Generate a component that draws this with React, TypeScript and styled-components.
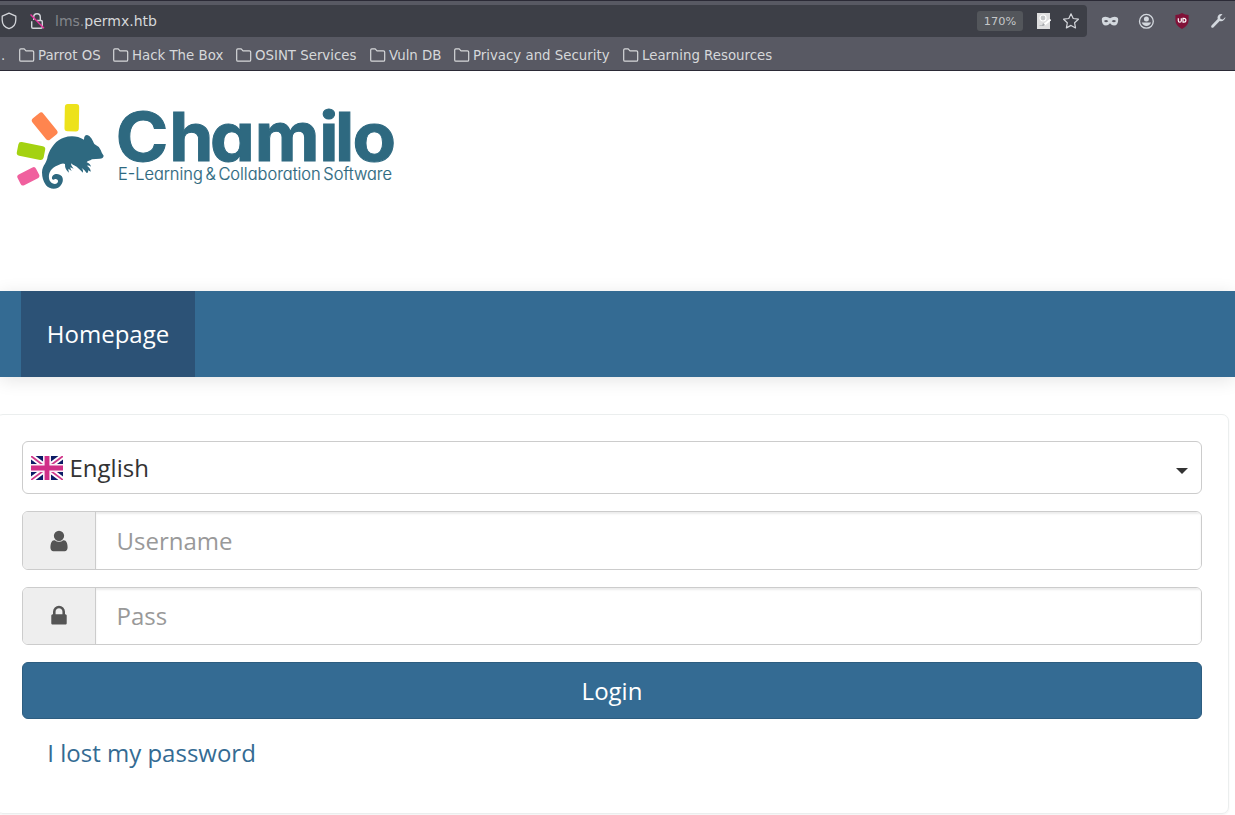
import React from "react";
import styled, { createGlobalStyle } from "styled-components";

const GlobalStyle = createGlobalStyle`
  * { box-sizing: border-box; }
  html, body { margin: 0; padding: 0; background: #fff; }
  body { overflow: hidden; font-family: "Open Sans", sans-serif; font-size: 24px; color: #333; }
`;

const Page = styled.div`
  width: 1235px;
  height: 815px;
  overflow: hidden;
  display: flex;
  flex-direction: column;
`;

const Chrome = styled.div`
  height: 71px;
  flex: none;
  background: #585963;
  border-top: 1px solid #2b2a36;
  border-bottom: 1px solid #2b2a36;
  font-family: "DejaVu Sans", sans-serif;
  color: #d6d8da;
`;

const Toolbar = styled.div`
  display: flex;
  align-items: center;
  padding-top: 4px;
  height: 36px;
`;

const AddressBar = styled.div`
  display: flex;
  align-items: center;
  width: 1087px;
  height: 32px;
  background: #3d3f47;
  border-radius: 0 4px 4px 0;
  padding-right: 7px;
  svg { flex: none; }
`;

const Gap = styled.span`
  width: 11px;
  flex: none;
`;

const Url = styled.div`
  font-size: 14px;
  line-height: 20px;
  margin-left: 10px;
  flex: 1;
  span { color: #83868c; }
`;

const ZoomBadge = styled.div`
  width: 46px;
  height: 20px;
  border-radius: 3px;
  background: #53565b;
  color: #c5c8ca;
  font-size: 11.3px;
  line-height: 21px;
  text-align: center;
  margin-right: 12px;
`;

const Extensions = styled.div`
  display: flex;
  align-items: center;
  padding-left: 14px;
  gap: 18px;
`;

const Bookmarks = styled.div`
  display: flex;
  align-items: center;
  height: 33px;
  padding-top: 2px;
  font-size: 13.333px;
  line-height: 16px;
`;

const Overflow = styled.span`
  width: 19px;
  padding: 2px 0 0 1px;
`;

const Bookmark = styled.div<{ $w: number }>`
  display: flex;
  align-items: center;
  gap: 3px;
  width: ${(p) => p.$w}px;
  white-space: nowrap;
  span { padding-top: 2px; }
`;

const Header = styled.header`
  height: 220px;
  flex: none;
  padding: 24px 0 0 10px;
  svg { display: block; }
`;

const Nav = styled.nav`
  height: 86px;
  flex: none;
  display: flex;
  padding-left: 21px;
  background: #346b93;
  box-shadow: 0 3px 17px rgba(0, 0, 0, 0.11);
`;

const NavItem = styled.a`
  width: 174px;
  display: flex;
  align-items: center;
  justify-content: center;
  padding-bottom: 2px;
  background: #2c5276;
  color: #fff;
`;

const Panel = styled.section`
  margin: 37px 6px 0 -4px;
  height: 400px;
  border: 1px solid #ebeeee;
  border-radius: 7px;
  box-shadow: 0 1px 2px rgba(0, 0, 0, 0.05);
  padding: 26px 26px 0 25px;
  display: flex;
  flex-direction: column;
  gap: 17px;
`;

const Language = styled.div`
  height: 53px;
  flex: none;
  display: flex;
  align-items: center;
  border: 1px solid #ccc;
  border-radius: 6px;
  padding: 0 13px 0 8px;
  span { margin-left: 6.5px; flex: 1; }
`;

const Caret = styled.i`
  margin-top: 6px;
  border: 6px solid transparent;
  border-top-color: #333;
  border-bottom: 0;
`;

const Field = styled.label<{ $h: number }>`
  height: ${(p) => p.$h}px;
  flex: none;
  display: flex;
  border: 1px solid #ccc;
  border-radius: 6px;
  overflow: hidden;
`;

const Addon = styled.span`
  width: 73px;
  display: flex;
  align-items: center;
  justify-content: center;
  padding-right: 1px;
  background: #eee;
  border-right: 1px solid #ccc;
  color: #555;
`;

const Input = styled.input<{ $lift?: number }>`
  flex: 1;
  border: 0;
  outline: 0;
  padding: 0 20px ${(p) => p.$lift ?? 0}px 20.5px;
  background: #fff;
  box-shadow: inset 0 2px 2px rgba(0, 0, 0, 0.075);
  font: inherit;
  &::placeholder { color: #999; opacity: 1; }
`;

const LoginButton = styled.button`
  height: 57px;
  flex: none;
  border: 1px solid #2d5d80;
  border-radius: 6px;
  background: #346b93;
  color: #fff;
  font: inherit;
  padding: 0;
`;

const LostLink = styled.a`
  color: #346b93;
  padding-left: 25.3px;
  line-height: 34px;
`;

const Folder = () => (
  <svg width="16" height="16" viewBox="0 0 16 16" fill="none" stroke="#d6d8da" strokeWidth="1.2" strokeLinejoin="round">
    <path d="M.7 12.900V3Q.7 1.800 1.800 1.800h3.400l1.800 2h6.400q1.300 0 1.300 1.200v7.900q0 1.300-1.300 1.300H2Q.7 14.200.7 12.900Z" />
  </svg>
);

const ShieldIcon = () => (
  <svg width="18" height="18" viewBox="0 0 18 18" fill="none" stroke="#d3d5da" strokeWidth="1.300" strokeLinejoin="round">
    <path d="M9 1.200 15.800 4.200v3.700C15.800 12.200 12.800 15.400 9 16.600 5.200 15.400 2.200 12.200 2.200 7.900V4.200Z" />
  </svg>
);

const InsecureIcon = () => (
  <svg width="16" height="18" viewBox="0 0 16 18" fill="none" stroke="#d3d5da" strokeWidth="1.400">
    <path d="M4.700 8V5a3.300 3.300 0 0 1 6.600 0V8M2.700 9.200v5.800q0 1.200 1.200 1.200h8.200q1.200 0 1.200-1.200V9.700q0-1.200-1.200-1.200H8" />
    <path d="M1.500 2.500 15 16.300" stroke="#e8339e" />
  </svg>
);

const ReaderIcon = () => (
  <svg width="16" height="18" viewBox="0 0 16 18">
    <path d="M2 1h13v16H2z" fill="#dededf" />
    <circle cx="8" cy="6" r="3" fill="#c4c6c8" stroke="#fff" strokeWidth="1.200" />
    <path d="M4.500 13.500H9" stroke="#bbbdc0" />
    <path d="m9.500 12.500 6-5" stroke="#fff" strokeWidth="2" />
    <path d="m8 11 2 2-3 1z" fill="#a5a8ab" />
  </svg>
);

const StarIcon = () => (
  <svg width="18" height="18" viewBox="0 0 18 18" fill="none" stroke="#d3d5da" strokeWidth="1.200" strokeLinejoin="round">
    <path d="m9 1.800 2.200 4.700 5.200.7-3.800 3.600.9 5.100L9 13.400l-4.600 2.500.9-5.100-3.700-3.600 5.200-.7Z" />
  </svg>
);

const MaskIcon = () => (
  <svg width="18" height="18" viewBox="0 0 18 18">
    <path fill="#d3d8de" fillRule="evenodd" d="M.8 7.500Q.8 4.700 4.500 4.700 7 4.700 9 6.200 11 4.700 13.500 4.700q3.700 0 3.700 2.800 0 6-4.200 6Q10.800 13.500 9 11.300q-1.800 2.200-4 2.200-4.200 0-4.200-6ZM3 9q1.800 2.300 4.300.2Q5.200 6.700 3 9Zm7.700.2Q13.200 11.300 15 9q-2.200-2.300-4.300.2Z" />
  </svg>
);

const AccountIcon = () => (
  <svg width="18" height="18" viewBox="0 0 18 18">
    <circle cx="9.400" cy="9.300" r="6.900" fill="none" stroke="#d3d8de" strokeWidth="1.300" />
    <circle cx="9.400" cy="7" r="2.500" fill="#d3d8de" />
    <path d="M4.700 10.500h9.400Q12.700 13.900 9.400 13.900T4.700 10.500Z" fill="#d3d8de" />
  </svg>
);

const BlockerIcon = () => (
  <svg width="18" height="18" viewBox="0 0 18 18">
    <path d="M9 1q3 2 6.600 2v5.200Q15.600 13.500 9 17 2.400 13.500 2.400 8.200V3Q6 3 9 1Z" fill="#801238" />
    <path d="M5.300 6.200v2.500q0 1.500 1.500 1.500T8.300 8.700V6.200M10 6.300v3.800h.9q2 0 2-1.900t-2-1.900Z" fill="none" stroke="#fff" strokeWidth="1.200" />
  </svg>
);

const WrenchIcon = () => (
  <svg width="18" height="18" viewBox="0 0 18 18">
    <path d="M15.900 4.700 13.400 7.200 11 6.800l-.4-2.300L13 2Q10.500 1.300 8.900 3 7.500 4.600 8.200 6.800L2 13.200q-.8 1 0 1.900t1.900 0l6.300-6.300q2.400.8 4.200-1 1.600-1.500 1.500-3.100Z" transform="translate(.5 .3)" fill="#d3d8de" />
  </svg>
);

const UserIcon = () => (
  <svg width="24" height="24" viewBox="0 0 1792 1792" fill="currentColor">
    <path d="M1536 1399q0 109-62.500 187t-150.500 78h-854q-88 0-150.500-78t-62.500-187q0-85 8.500-160.500t31.500-152 58.500-131 94-89 134.500-34.500q131 128 313 128t313-128q76 0 134.500 34.500t94 89 58.500 131 31.500 152 8.500 160.500zm-256-887q0 159-112.500 271.500t-271.500 112.500-271.500-112.500-112.500-271.500 112.500-271.500 271.500-112.500 271.500 112.500 112.500 271.500z" />
  </svg>
);

const LockIcon = () => (
  <svg width="24" height="24" viewBox="0 0 1792 1792" fill="currentColor">
    <path d="M640 768h512v-192q0-106-75-181t-181-75-181 75-75 181v192zm832 96v576q0 40-28 68t-68 28h-960q-40 0-68-28t-28-68v-576q0-40 28-68t68-28h32v-192q0-184 132-316t316-132 316 132 132 316v192h32q40 0 68 28t28 68z" />
  </svg>
);

const Logo = () => (
  <svg width="390" height="100" viewBox="0 0 1170 300">
    <rect x="164" y="27" width="43" height="82" rx="9" fill="#ede21b" transform="rotate(1 185 68)" />
    <rect x="83" y="53" width="42" height="82" rx="9" fill="#ff854f" transform="rotate(-39 104 94)" />
    <rect x="22" y="147" width="82" height="42" rx="9" fill="#a4d211" transform="rotate(11 63 168)" />
    <rect x="24" y="226" width="62" height="36" rx="8" fill="#f0609e" transform="rotate(-27 55 244)" />
    <path
      fill="#2e6980"
      d="M96 232C97 211 111 204 113 184C120 158 141 133 161 128C181 121 203 122 222 134Q222 120 231 120C243 123 248 137 253 147Q266 153 272 165Q276 177 281 182Q280 191 269 191L246 193C239 198 233 197 230 202Q241 206 243 215Q236 210 231 212Q243 221 242 230L234 226Q236 234 230 234Q225 225 215 219Q221 225 219 233Q211 225 200 215Q185 209 185 205Q180 209 191 221L181 217Q181 222 185 228L175 221Q175 225 177 233Q164 223 165 207Q157 203 144 211C124 219 115 232 117 250C119 264 133 270 141 265C147 259 144 252 135 252Q129 257 126 251C124 239 139 233 149 239C160 243 161 257 155 267C144 287 119 284 108 271Q96 255 96 232Z"
    />
    <g fill="#2e6980">
      <text x="299 451 566 693 875 920 969" y="197" transform="scale(1.06 1)" fontFamily="Inter, sans-serif" fontWeight="700" fontSize="201" stroke="#2e6980" strokeWidth="3" style={{ fontFeatureSettings: '"cv11"' }}>
        Chamilo
      </text>
      <text x="324" y="255" fontFamily="Inter, sans-serif" fontWeight="300" fontSize="50" textLength="822" lengthAdjust="spacingAndGlyphs" stroke="#2e6980" strokeWidth=".6" style={{ fontFeatureSettings: '"cv11"', wordSpacing: "-6px" }}>
        E-Learning &amp; Collaboration Software
      </text>
    </g>
  </svg>
);

const UkFlag = () => (
  <svg width="32" height="24" viewBox="0 0 32 24">
    <rect width="32" height="24" fill="#0c1c66" />
    <path d="M0 0 32 24M32 0 0 24" stroke="#fff" strokeWidth="5.500" />
    <path d="M0 0 32 24M32 0 0 24" stroke="#d13a8c" strokeWidth="1.800" />
    <path d="M16 0v24M0 12h32" stroke="#fbeef6" strokeWidth="8" />
    <path d="M16 0v24M0 12h32" stroke="#d02f88" strokeWidth="4.800" />
  </svg>
);

const bookmarks = [
  { label: "Parrot OS", width: 94 },
  { label: "Hack The Box", width: 123 },
  { label: "OSINT Services", width: 134 },
  { label: "Vuln DB", width: 84 },
  { label: "Privacy and Security", width: 169 },
  { label: "Learning Resources", width: 160 },
];

export default function App() {
  return (
    <Page>
      <GlobalStyle />
      <Chrome>
        <Toolbar>
          <AddressBar>
            <ShieldIcon />
            <Gap />
            <InsecureIcon />
            <Url><span>lms.</span>permx.htb</Url>
            <ZoomBadge>170%</ZoomBadge>
            <ReaderIcon />
            <Gap />
            <StarIcon />
          </AddressBar>
          <Extensions>
            <MaskIcon />
            <AccountIcon />
            <BlockerIcon />
            <WrenchIcon />
          </Extensions>
        </Toolbar>
        <Bookmarks>
          <Overflow>.</Overflow>
          {bookmarks.map((b) => (
            <Bookmark key={b.label} $w={b.width}>
              <Folder />
              <span>{b.label}</span>
            </Bookmark>
          ))}
        </Bookmarks>
      </Chrome>
      <Header>
        <Logo />
      </Header>
      <Nav>
        <NavItem>Homepage</NavItem>
      </Nav>
      <Panel>
        <Language>
          <UkFlag />
          <span>English</span>
          <Caret />
        </Language>
        <Field $h={59}>
          <Addon><UserIcon /></Addon>
          <Input placeholder="Username" />
        </Field>
        <Field $h={58}>
          <Addon><LockIcon /></Addon>
          <Input type="password" placeholder="Pass" $lift={2} />
        </Field>
        <LoginButton>Login</LoginButton>
        <LostLink>I lost my password</LostLink>
      </Panel>
    </Page>
  );
}
